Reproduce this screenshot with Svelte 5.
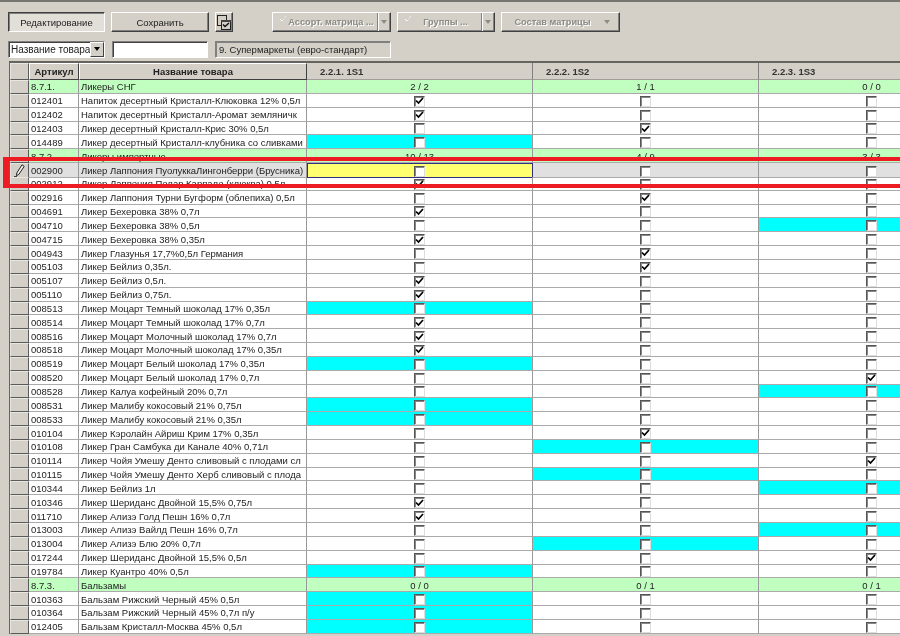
<script lang="ts">
  type Row = { code: string; name: string; cells?: string; counts?: string[]; current?: boolean };

  // cells: one letter per store column - x checked, c cyan, y yellow cursor, . empty
  const rows: Row[] = [
    { code: '8.7.1.', name: 'Ликеры СНГ', counts: ['2 / 2', '1 / 1', '0 / 0'] },
    { code: '012401', name: 'Напиток десертный Кристалл-Клюковка 12% 0,5л', cells: 'x..' },
    { code: '012402', name: 'Напиток десертный Кристалл-Аромат земляничк', cells: 'x..' },
    { code: '012403', name: 'Ликер десертный Кристалл-Крис 30% 0,5л', cells: '.x.' },
    { code: '014489', name: 'Ликер десертный Кристалл-клубника со сливками', cells: 'c..' },
    { code: '8.7.2.', name: 'Ликеры импортные', counts: ['10 / 13', '4 / 9', '3 / 3'] },
    { code: '002900', name: 'Ликер Лаппония ПуолуккаЛингонберри (Брусника)', cells: 'y..', current: true },
    { code: '002912', name: 'Ликер Лаппония Полар Карпало (клюква) 0,5л', cells: 'x..' },
    { code: '002916', name: 'Ликер Лаппония Турни Бугформ (облепиха) 0,5л', cells: '.x.' },
    { code: '004691', name: 'Ликер Бехеровка 38% 0,7л', cells: 'x..' },
    { code: '004710', name: 'Ликер Бехеровка 38% 0,5л', cells: '..c' },
    { code: '004715', name: 'Ликер Бехеровка 38% 0,35л', cells: 'x..' },
    { code: '004943', name: 'Ликер Глазунья 17,7%0,5л Германия', cells: '.x.' },
    { code: '005103', name: 'Ликер Бейлиз 0,35л.', cells: '.x.' },
    { code: '005107', name: 'Ликер Бейлиз 0,5л.', cells: 'x..' },
    { code: '005110', name: 'Ликер Бейлиз 0,75л.', cells: 'x..' },
    { code: '008513', name: 'Ликер Моцарт Темный шоколад 17% 0,35л', cells: 'c..' },
    { code: '008514', name: 'Ликер Моцарт Темный шоколад 17% 0,7л', cells: 'x..' },
    { code: '008516', name: 'Ликер Моцарт Молочный шоколад 17% 0,7л', cells: 'x..' },
    { code: '008518', name: 'Ликер Моцарт Молочный шоколад 17% 0,35л', cells: 'x..' },
    { code: '008519', name: 'Ликер Моцарт Белый шоколад 17% 0,35л', cells: 'c..' },
    { code: '008520', name: 'Ликер Моцарт Белый шоколад 17% 0,7л', cells: '..x' },
    { code: '008528', name: 'Ликер Калуа кофейный 20% 0,7л', cells: '..c' },
    { code: '008531', name: 'Ликер Малибу кокосовый 21% 0,75л', cells: 'c..' },
    { code: '008533', name: 'Ликер Малибу кокосовый 21% 0,35л', cells: 'c..' },
    { code: '010104', name: 'Ликер Кэролайн Айриш Крим 17% 0,35л', cells: '.x.' },
    { code: '010108', name: 'Ликер Гран Самбука ди Канале 40% 0,71л', cells: '.c.' },
    { code: '010114', name: 'Ликер Чойя Умешу Денто сливовый с плодами сл', cells: '..x' },
    { code: '010115', name: 'Ликер Чойя Умешу Денто Херб сливовый с плода', cells: '.c.' },
    { code: '010344', name: 'Ликер Бейлиз 1л', cells: '..c' },
    { code: '010346', name: 'Ликер Шериданс Двойной 15,5% 0,75л', cells: 'x..' },
    { code: '011710', name: 'Ликер Ализэ Голд Пешн 16% 0,7л', cells: 'x..' },
    { code: '013003', name: 'Ликер Ализэ Вайлд Пешн 16% 0,7л', cells: '..c' },
    { code: '013004', name: 'Ликер Ализэ Блю 20% 0,7л', cells: '.c.' },
    { code: '017244', name: 'Ликер Шериданс Двойной 15,5% 0,5л', cells: '..x' },
    { code: '019784', name: 'Ликер Куантро 40% 0,5л', cells: 'c..' },
    { code: '8.7.3.', name: 'Бальзамы', counts: ['0 / 0', '0 / 1', '0 / 1'] },
    { code: '010363', name: 'Бальзам Рижский Черный 45% 0,5л', cells: 'c..' },
    { code: '010364', name: 'Бальзам Рижский Черный 45% 0,7л п/у', cells: 'c..' },
    { code: '012405', name: 'Бальзам Кристалл-Москва 45% 0,5л', cells: 'c..' }
  ];

  const columns = ['2.2.1. 1S1', '2.2.2. 1S2', '2.2.3. 1S3'];
</script>

<div class="app">
  <div class="toolbar">
    <button class="btn pressed">Редактирование</button>
    <button class="btn save">Сохранить</button>
    <button class="btn icon-btn" aria-label="Выбор">
      <svg width="16" height="17" viewBox="0 0 16 17">
        <rect x="1.5" y="1.5" width="9" height="10" fill="none" stroke="#222" />
        <rect x="5.5" y="6.5" width="9" height="9" fill="#d4d0c8" stroke="#222" />
        <rect x="5" y="6" width="10" height="2" fill="#444" />
        <path d="M7 10.5l2 2 4-3.5" fill="none" stroke="#111" stroke-width="1.4" />
      </svg>
    </button>
    <div class="menu split first">
      <svg class="tick" width="8" height="7" viewBox="0 0 8 7"><path d="M1 4l2 2 4-5" fill="none" stroke="#fff" stroke-width="1" /></svg>
      <span class="menu-label">Ассорт. матрица ...</span>
      <span class="arrow"></span>
    </div>
    <div class="menu split groups">
      <svg class="tick" width="8" height="7" viewBox="0 0 8 7"><path d="M1 4l2 2 4-5" fill="none" stroke="#fff" stroke-width="1" /></svg>
      <span class="menu-label">Группы ...</span>
      <span class="arrow"></span>
    </div>
    <div class="menu composition">
      <span class="menu-label">Состав матрицы</span>
      <span class="arrow plain"></span>
    </div>
  </div>

  <div class="filters">
    <div class="select">
      <span>Название товара</span>
      <span class="select-btn"></span>
    </div>
    <div class="input"></div>
    <div class="format">9. Супермаркеты (евро-стандарт)</div>
  </div>

  <div class="grid">
    <div class="row head">
      <div class="ind"></div>
      <div class="th">Артикул</div>
      <div class="th">Название товара</div>
      {#each columns as col}
        <div class="th-store">{col}</div>
      {/each}
    </div>

    {#each rows as row}
      <div class="row" class:group={row.counts} class:current={row.current}>
        <div class="ind">
          {#if row.current}
            <svg class="pencil" width="12" height="13" viewBox="0 0 12 13">
              <path d="M8 .8l2.2 1.6-5.4 8-2.3 1.2.3-2.6z" fill="#f2f2f2" stroke="#222" />
              <path d="M0 12.5h3" stroke="#444" />
            </svg>
          {/if}
        </div>
        <div class="td">{row.code}</div>
        <div class="td">{row.name}</div>
        {#if row.counts}
          {#each row.counts as count}
            <div class="td count">{count}</div>
          {/each}
        {:else}
          {#each (row.cells ?? '') as cell}
            <div class="td check" class:cyan={cell === 'c'} class:cursor={cell === 'y'}>
              <span class="box">
                {#if cell === 'x'}
                  <svg width="9" height="8" viewBox="0 0 9 8"><path d="M1 3.5l2.5 2.5 4.5-5" fill="none" stroke="#000" stroke-width="1.7" /></svg>
                {/if}
              </span>
            </div>
          {/each}
        {/if}
      </div>
    {/each}
  </div>

  <div class="highlight"></div>
</div>

<style>
  :global(body) {
    margin: 0;
    background: #d4d0c8;
  }

  .app {
    position: relative;
    width: 900px;
    height: 636px;
    overflow: hidden;
    box-sizing: border-box;
    border-top: 2px solid #77756f;
    background: #d4d0c8;
    font-family: "Liberation Sans", Arial, sans-serif;
    font-size: 9.5px;
    color: #222;
    filter: blur(0.3px);
  }

  .toolbar {
    display: flex;
    align-items: flex-start;
    gap: 6px;
    padding: 10px 0 0 8px;
    height: 20px;
  }

  .btn {
    box-sizing: border-box;
    flex: none;
    width: 97px;
    height: 20px;
    padding: 0;
    font: inherit;
    color: #222;
    background: #d4d0c8;
    border: 1px solid;
    border-color: #fff #404040 #404040 #fff;
    box-shadow: inset -1px -1px 0 #808080;
  }

  .save { width: 98px; }

  .pressed {
    border-color: #404040 #fff #fff #404040;
    box-shadow: inset 1px 1px 0 #808080;
    background: #e2dfd9;
  }

  .icon-btn {
    display: flex;
    align-items: center;
    justify-content: center;
    width: 18px;
  }

  .menu {
    position: relative;
    box-sizing: border-box;
    flex: none;
    height: 20px;
    display: flex;
    align-items: center;
    border: 1px solid;
    border-color: #fff #404040 #404040 #fff;
    box-shadow: inset -1px -1px 0 #808080;
    color: #8d8b85;
    text-shadow: 1px 1px 0 #fff;
    font-weight: bold;
    font-size: 9.2px;
  }

  .first { width: 119px; margin-left: 33px; }
  .groups { width: 98px; }
  .composition { width: 119px; }

  .menu-label {
    flex: 1;
    text-align: center;
    padding-left: 4px;
    white-space: nowrap;
  }

  .split .menu-label { padding-left: 12px; }

  .tick {
    position: absolute;
    left: 6px;
    top: 2px;
    filter: drop-shadow(0 0 0.5px #888);
  }

  .arrow {
    position: relative;
    flex: none;
    width: 12px;
    height: 100%;
    border-left: 1px solid #808080;
    box-shadow: inset 1px 0 0 #fff;
  }

  .arrow.plain {
    border-left: none;
    box-shadow: none;
    width: 20px;
  }

  .arrow::after {
    content: '';
    position: absolute;
    left: 3px;
    top: 7px;
    border: 3px solid transparent;
    border-top: 4px solid #8d8b85;
    border-bottom: none;
  }

  .arrow.plain::after { left: 5px; }

  .filters {
    display: flex;
    gap: 7px;
    height: 17px;
    padding: 9px 0 0 8px;
  }

  .select, .input, .format {
    box-sizing: border-box;
    height: 17px;
    border: 1px solid;
    border-color: #808080 #fff #fff #808080;
    box-shadow: inset 1px 1px 0 #404040;
  }

  .select {
    width: 97px;
    display: flex;
    align-items: center;
    justify-content: space-between;
    padding-left: 2px;
    background: #fff;
    font-size: 10px;
    white-space: nowrap;
  }

  .select-btn {
    position: relative;
    box-sizing: border-box;
    flex: none;
    width: 14px;
    height: 15px;
    background: #d4d0c8;
    border: 1px solid;
    border-color: #fff #404040 #404040 #fff;
  }

  .select-btn::after {
    content: '';
    position: absolute;
    left: 3px;
    top: 4px;
    border: 3px solid transparent;
    border-top: 4px solid #000;
    border-bottom: none;
  }

  .input {
    width: 96px;
    background: #fff;
  }

  .format {
    width: 176px;
    padding: 2px 0 0 3px;
    box-shadow: inset 1px 1px 0 #808080;
    white-space: nowrap;
  }

  .grid {
    margin: 3px 0 0 9px;
    border-top: 2px solid #66645f;
    border-left: 1px solid #66645f;
  }

  .row {
    display: grid;
    grid-template-columns: 19px 50px 228px 226px 226px 226px;
    height: 13.846px;
    background: #fff;
  }

  .head {
    height: 17px;
    background: #d4d0c8;
    font-weight: bold;
  }

  .ind {
    box-sizing: border-box;
    display: flex;
    align-items: center;
    justify-content: center;
    background: #d4d0c8;
    border: 1px solid;
    border-color: #e8e6e0 #5a5a5a #5a5a5a #e8e6e0;
  }

  .pencil { flex: none; }

  .th {
    box-sizing: border-box;
    display: flex;
    align-items: center;
    justify-content: center;
    border: 1px solid;
    border-color: #fff #404040 #404040 #fff;
  }

  .th-store {
    box-sizing: border-box;
    display: flex;
    align-items: center;
    padding-left: 13px;
    border-right: 1px solid #808080;
    border-bottom: 1px solid #a09e98;
    color: #333;
  }

  .td {
    box-sizing: border-box;
    display: flex;
    align-items: center;
    padding: 1px 0 0 2px;
    white-space: nowrap;
    overflow: hidden;
    border-right: 1px solid #999;
    border-bottom: 1px solid #aaa;
  }

  .group { background: #c0ffc0; }
  .current { background: #e0e0e0; }

  .count {
    justify-content: center;
    padding-left: 0;
  }

  .check {
    justify-content: center;
    align-items: flex-end;
    padding: 0 1px 0 0;
    overflow: visible;
  }

  .cyan { background: #00ffff; }

  .cursor {
    background: #ffff70;
    outline: 1px solid #303080;
    outline-offset: -1px;
  }

  .box {
    box-sizing: border-box;
    flex: none;
    display: flex;
    align-items: center;
    justify-content: center;
    width: 11px;
    height: 11px;
    background: #fff;
    border: 1px solid;
    border-color: #555 #ddd #ddd #555;
    box-shadow: inset 1px 1px 0 #888;
  }

  .highlight {
    position: absolute;
    left: 3px;
    top: 155px;
    width: 920px;
    height: 31px;
    box-sizing: border-box;
    border: 4px solid #ed1c24;
    border-left-width: 6px;
  }
</style>
